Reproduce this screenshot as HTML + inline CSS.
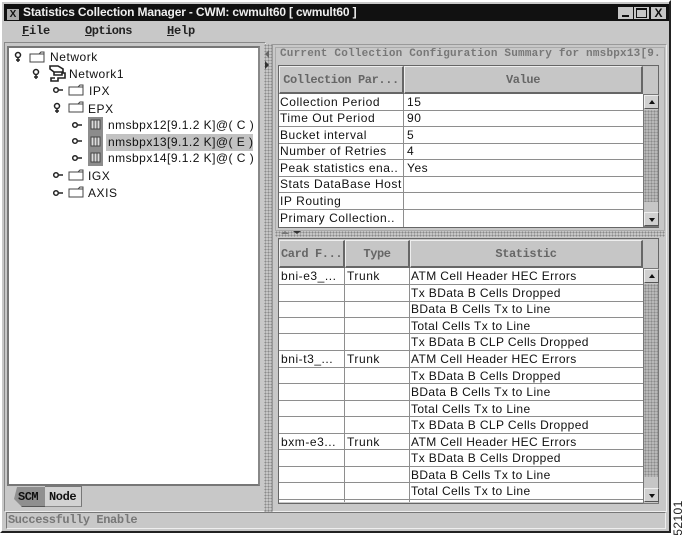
<!DOCTYPE html>
<html><head><meta charset="utf-8"><style>
html,body{margin:0;padding:0;background:#fff}
#p{position:relative;width:686px;height:535px;overflow:hidden;background:#fff;font-family:"Liberation Sans",sans-serif;color:#111}
#p div{position:absolute;box-sizing:border-box}
.t{white-space:nowrap;font-size:12px;line-height:14px;letter-spacing:.55px}
.s{letter-spacing:.38px}
.n{letter-spacing:.46px}
.m{white-space:nowrap;font-family:"Liberation Mono",monospace;font-weight:bold}
.h{background:#c6c6c6;border-top:1px solid #eee;border-left:1px solid #eee;border-right:2px solid #666;border-bottom:2px solid #666;color:#666;font-family:"Liberation Mono",monospace;font-weight:bold;font-size:12px;line-height:26px;letter-spacing:-.4px;text-align:center;white-space:nowrap}
.l{background:#8e8e8e;height:1px}
.v{background:#8e8e8e;width:1px}
.sb{background:#c6c6c6;border:1px solid #777}
.btn{background:#d0d0d0;border-top:1px solid #eee;border-left:1px solid #eee;border-right:1px solid #555;border-bottom:1px solid #555;width:15px;height:14px}
.dot{background-color:#c6c6c6;background-image:radial-gradient(#8a8a8a 45%,transparent 50%);background-size:3px 3px}
svg{position:absolute;overflow:visible}
</style></head><body><div id="p">
<div style="left:0;top:0;width:671px;height:533px;background:#c8c8c8;border:2px solid #fff;border-right:2px solid #222;border-bottom:2px solid #222;outline:0"></div>
<div style="left:4px;top:4px;width:665px;height:17px;background:#111"></div>
<div style="left:7px;top:9px;width:12px;height:11px;background:#aaa;color:#111;font:bold 10px/11px 'Liberation Sans',sans-serif;text-align:center">X</div>
<div class="t" style="left:23px;top:5px;color:#eee;font-weight:bold;font-size:12px;letter-spacing:-.16px">Statistics Collection Manager - CWM: cwmult60 [ cwmult60 ]</div>
<div style="left:618px;top:7px;width:15px;height:12px;background:#c6c6c6"><div style="left:4px;top:8px;width:7px;height:2px;background:#111"></div></div>
<div style="left:634px;top:7px;width:15px;height:12px;background:#c6c6c6"><div style="left:2px;top:1px;width:11px;height:10px;border:1px solid #111;border-top-width:2px"></div></div>
<div style="left:651px;top:7px;width:15px;height:12px;background:#c6c6c6;font:bold 12px/12px 'Liberation Sans',sans-serif;text-align:center">X</div>

<div class="m" style="left:22px;top:24px;font-size:12px;line-height:15px;letter-spacing:-.2px;color:#222"><u>F</u>ile</div>
<div class="m" style="left:85px;top:24px;font-size:12px;line-height:15px;letter-spacing:-.5px;color:#222"><u>O</u>ptions</div>
<div class="m" style="left:167px;top:24px;font-size:12px;line-height:15px;letter-spacing:-.2px;color:#222"><u>H</u>elp</div>

<div style="left:4px;top:42px;width:262px;height:470px;border:1px solid #888;border-right:1px solid #eee;border-bottom:1px solid #eee"></div>
<div style="left:7px;top:46px;width:253px;height:440px;border:2px solid #777;border-right-color:#888;background:#fff"></div>

<svg style="left:0;top:0" width="270" height="210" viewBox="0 0 270 210" fill="none" stroke="#222" stroke-width="1.5">
<circle cx="18" cy="55" r="2.5"/><path d="M18 58v4M16 60h4"/>
<circle cx="36" cy="72" r="2.5"/><path d="M36 75v4M34 77h4"/>
<circle cx="57" cy="106" r="2.5"/><path d="M57 109v4M55 111h4"/>
<circle cx="56" cy="90" r="2.3"/><path d="M59 90h4"/><circle cx="56" cy="175" r="2.3"/><path d="M59 175h4"/><circle cx="56" cy="193" r="2.3"/><path d="M59 193h4"/><circle cx="75" cy="125" r="2.3"/><path d="M78 125h4"/><circle cx="75" cy="141" r="2.3"/><path d="M78 141h4"/><circle cx="75" cy="158" r="2.3"/><path d="M78 158h4"/>
<g stroke="#444" stroke-width="1"><path d="M30 62V54h9l2-2h3v10zM39 54h5"/>
<path d="M69 95V87h9l2-2h3v10zM78 87h5"/><path d="M69 112V104h9l2-2h3v10zM78 104h5"/><path d="M69 180V172h9l2-2h3v10zM78 172h5"/><path d="M69 197V189h9l2-2h3v10zM78 189h5"/></g>
<path d="M50 66h8l5 3v3h-9l-4-3zM54 72v3h8v-2h3v5h-7v3h-7v-3h4" stroke-width="1.6"/>
</svg>
<div style="left:88px;top:117px;width:15px;height:49px;background:#8c8c8c"></div>
<svg style="left:0;top:0" width="270" height="210" fill="none" stroke="#444">
<path d="M91 120h9v9h-9zM94 120v9M97 120v9M91 137h9v9h-9zM94 137v9M97 137v9M91 153h9v9h-9zM94 153v9M97 153v9" fill="#ddd"/>
</svg>
<div style="left:106px;top:134px;width:147px;height:17px;background:#c2c2c2"></div>

<div class="t" style="left:50px;top:50px">Network</div>
<div class="t" style="left:69px;top:67px">Network1</div>
<div class="t" style="left:89px;top:84px">IPX</div>
<div class="t" style="left:88px;top:102px">EPX</div>
<div class="t n" style="left:108px;top:118px">nmsbpx12[9.1.2 K]@( C )</div>
<div class="t n" style="left:108px;top:135px">nmsbpx13[9.1.2 K]@( E )</div>
<div class="t n" style="left:108px;top:151px">nmsbpx14[9.1.2 K]@( C )</div>
<div class="t" style="left:88px;top:169px">IGX</div>
<div class="t" style="left:88px;top:186px">AXIS</div>

<div style="left:14px;top:487px;width:31px;height:20px;background:#8f8f8f;border-bottom:1px solid #555;clip-path:polygon(3px 0,100% 0,100% 100%,8px 100%,0 12px)"></div>
<div class="m" style="left:18px;top:491px;font-size:12px;line-height:13px;letter-spacing:-.5px;color:#111">SCM</div>
<div style="left:45px;top:486px;width:37px;height:21px;background:#d2d2d2;border-right:1px solid #777;border-bottom:1px solid #888;border-top:1px solid #777"></div>
<div class="m" style="left:49px;top:491px;font-size:12px;line-height:13px;letter-spacing:-.4px;color:#111">Node</div>

<div class="dot" style="left:264px;top:44px;width:8px;height:468px"></div>
<svg style="left:263px;top:48px" width="8" height="24"><path d="M6 2 2 6l4 4z" fill="#666"/><path d="M2 13l4 4-4 4z" fill="#333"/></svg>

<div style="left:272px;top:44px;width:395px;height:468px;border:1px solid #999;border-right-color:#eee;border-bottom-color:#eee"></div>
<div style="left:275px;top:47px;width:390px;height:184px;border:1px solid #aaa"></div>
<div class="m" style="left:280px;top:48px;width:381px;overflow:hidden;background:#c8c8c8;font-size:11px;line-height:13px;color:#777;letter-spacing:.2px;font-weight:bold">Current Collection Configuration Summary for nmsbpx13[9.1</div>

<div style="left:278px;top:65px;width:381px;height:163px;background:#c6c6c6;border:1px solid #666"></div>
<div class="h" style="left:279px;top:66px;width:125px;height:28px">Collection Par...</div>
<div class="h" style="left:404px;top:66px;width:239px;height:28px">Value</div>
<div style="left:279px;top:94px;width:364px;height:133px;background:#fff"></div>
<div class="l" style="left:279px;top:110px;width:364px"></div><div class="l" style="left:279px;top:126px;width:364px"></div><div class="l" style="left:279px;top:143px;width:364px"></div><div class="l" style="left:279px;top:159px;width:364px"></div><div class="l" style="left:279px;top:176px;width:364px"></div><div class="l" style="left:279px;top:192px;width:364px"></div><div class="l" style="left:279px;top:209px;width:364px"></div>
<div class="v" style="left:403px;top:94px;height:133px"></div>
<div class="t" style="left:280px;top:95px">Collection Period</div><div class="t" style="left:407px;top:95px">15</div>
<div class="t" style="left:280px;top:111px">Time Out Period</div><div class="t" style="left:407px;top:111px">90</div>
<div class="t" style="left:280px;top:128px">Bucket interval</div><div class="t" style="left:407px;top:128px">5</div>
<div class="t" style="left:280px;top:144px">Number of Retries</div><div class="t" style="left:407px;top:144px">4</div>
<div class="t" style="left:280px;top:161px">Peak statistics ena..</div><div class="t" style="left:407px;top:161px">Yes</div>
<div class="t" style="left:280px;top:177px">Stats DataBase Host</div>
<div class="t" style="left:280px;top:194px">IP Routing</div>
<div class="t" style="left:280px;top:211px">Primary Collection..</div>

<div class="sb" style="left:643px;top:94px;width:16px;height:133px"></div>
<div class="btn" style="left:644px;top:95px"><svg style="left:3px;top:3px" width="8" height="6"><path d="M4 1 1 5h6z" fill="#111"/></svg></div>
<div class="dot" style="left:644px;top:110px;width:14px;height:92px;background-color:#b8b8b8"></div>
<div class="btn" style="left:644px;top:212px"><svg style="left:3px;top:4px" width="8" height="6"><path d="M1 1h6L4 5z" fill="#111"/></svg></div>

<div class="dot" style="left:275px;top:231px;width:390px;height:6px"></div>
<svg style="left:278px;top:230px" width="26" height="6"><path d="M3 4 7 1l4 3z" fill="#777"/><path d="M15 1h8l-4 3z" fill="#333"/></svg>

<div style="left:278px;top:238px;width:381px;height:266px;background:#c6c6c6;border:1px solid #666"></div>
<div class="h" style="left:279px;top:240px;width:66px;height:28px;text-align:left;padding-left:1px">Card F...</div>
<div class="h" style="left:345px;top:240px;width:65px;height:28px">Type</div>
<div class="h" style="left:410px;top:240px;width:233px;height:28px">Statistic</div>
<div style="left:279px;top:268px;width:364px;height:234px;background:#fff"></div>
<div class="v" style="left:344px;top:268px;height:234px"></div><div class="v" style="left:409px;top:268px;height:234px"></div>
<div class="l" style="left:279px;top:284px;width:364px"></div><div class="l" style="left:279px;top:301px;width:364px"></div><div class="l" style="left:279px;top:317px;width:364px"></div><div class="l" style="left:279px;top:333px;width:364px"></div><div class="l" style="left:279px;top:350px;width:364px"></div><div class="l" style="left:279px;top:367px;width:364px"></div><div class="l" style="left:279px;top:383px;width:364px"></div><div class="l" style="left:279px;top:400px;width:364px"></div><div class="l" style="left:279px;top:416px;width:364px"></div><div class="l" style="left:279px;top:433px;width:364px"></div><div class="l" style="left:279px;top:449px;width:364px"></div><div class="l" style="left:279px;top:466px;width:364px"></div><div class="l" style="left:279px;top:482px;width:364px"></div><div class="l" style="left:279px;top:499px;width:364px"></div>

<div class="t" style="left:281px;top:269px">bni-e3_...</div><div class="t" style="left:347px;top:269px">Trunk</div><div class="t s" style="left:411px;top:269px">ATM Cell Header HEC Errors</div>
<div class="t s" style="left:411px;top:286px">Tx BData B Cells Dropped</div>
<div class="t s" style="left:411px;top:302px">BData B Cells Tx to Line</div>
<div class="t s" style="left:411px;top:319px">Total Cells Tx to Line</div>
<div class="t s" style="left:411px;top:335px">Tx BData B CLP Cells Dropped</div>
<div class="t" style="left:281px;top:352px">bni-t3_...</div><div class="t" style="left:347px;top:352px">Trunk</div><div class="t s" style="left:411px;top:352px">ATM Cell Header HEC Errors</div>
<div class="t s" style="left:411px;top:369px">Tx BData B Cells Dropped</div>
<div class="t s" style="left:411px;top:385px">BData B Cells Tx to Line</div>
<div class="t s" style="left:411px;top:402px">Total Cells Tx to Line</div>
<div class="t s" style="left:411px;top:418px">Tx BData B CLP Cells Dropped</div>
<div class="t" style="left:281px;top:435px">bxm-e3...</div><div class="t" style="left:347px;top:435px">Trunk</div><div class="t s" style="left:411px;top:435px">ATM Cell Header HEC Errors</div>
<div class="t s" style="left:411px;top:451px">Tx BData B Cells Dropped</div>
<div class="t s" style="left:411px;top:468px">BData B Cells Tx to Line</div>
<div class="t s" style="left:411px;top:484px">Total Cells Tx to Line</div>

<div class="sb" style="left:643px;top:268px;width:16px;height:236px"></div>
<div class="btn" style="left:644px;top:269px"><svg style="left:3px;top:3px" width="8" height="6"><path d="M4 1 1 5h6z" fill="#111"/></svg></div>
<div class="dot" style="left:644px;top:284px;width:14px;height:193px;background-color:#b8b8b8"></div>
<div class="btn" style="left:644px;top:488px"><svg style="left:3px;top:4px" width="8" height="6"><path d="M1 1h6L4 5z" fill="#111"/></svg></div>

<div style="left:6px;top:512px;width:660px;height:17px;background:#c8c8c8;border:1px solid #777;border-right-color:#eee;border-bottom-color:#eee"></div>
<div class="m" style="left:8px;top:514px;font-size:12px;line-height:13px;color:#777;letter-spacing:-.4px">Successfully Enable</div>
<div class="t" style="left:660px;top:511px;width:36px;height:14px;transform:rotate(-90deg);font-size:12px;letter-spacing:.4px;text-align:center;color:#222">52101</div>
</div></body></html>
